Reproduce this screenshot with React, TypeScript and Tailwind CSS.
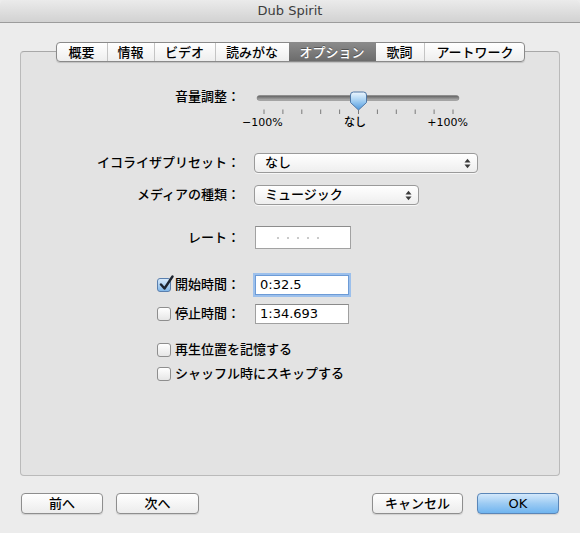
import type { ReactNode } from "react";

const FONT = "font-['Lucida_Grande','DejaVu_Sans','Noto_Sans_CJK_JP',sans-serif]";

const TABS = [
  { label: "概要", w: "w-[50px]" },
  { label: "情報", w: "w-[47px]" },
  { label: "ビデオ", w: "w-[61px]" },
  { label: "読みがな", w: "w-[74px]" },
  { label: "オプション", w: "w-[87px]", active: true },
  { label: "歌詞", w: "w-[48px]" },
  { label: "アートワーク", w: "w-[102px]" },
];

function TabBar() {
  return (
    <div className="relative z-10 mx-auto flex h-[20px] w-[469px] overflow-hidden rounded-[4px] border border-[#8a8a8a] bg-gradient-to-b from-white to-[#eeeeee] shadow-[0_1px_1px_rgba(0,0,0,0.15)]">
      {TABS.map((tab, i) => (
        <div
          key={tab.label}
          className={`flex h-full shrink-0 items-center justify-center text-[13px] leading-none ${tab.w} ${
            tab.active
              ? "bg-gradient-to-b from-[#8a8a8a] to-[#6c6c6c] text-white [text-shadow:0_-1px_0_rgba(0,0,0,0.35)]"
              : "text-black"
          } ${i > 0 && !tab.active && !TABS[i - 1].active ? "border-l border-[#c4c4c4]" : ""}`}
        >
          {tab.label}
        </div>
      ))}
    </div>
  );
}

function Label({ children }: { children: ReactNode }) {
  return <div className="w-[219px] shrink-0 text-right text-[13px] leading-[20px] text-black">{children}</div>;
}

function VolumeSlider() {
  const ticks = Array.from({ length: 11 }, (_, i) => 14 + i * 18.9);
  return (
    <div className="ml-[10px] flex flex-col">
      <svg width="230" height="30" viewBox="0 0 230 30">
        <defs>
          <linearGradient id="track" x1="0" y1="0" x2="0" y2="1">
            <stop offset="0" stopColor="#5e5e5e" />
            <stop offset="1" stopColor="#b4b4b4" />
          </linearGradient>
          <linearGradient id="thumb" x1="0" y1="0" x2="0" y2="1">
            <stop offset="0" stopColor="#eef7fe" />
            <stop offset="0.45" stopColor="#a9d2f3" />
            <stop offset="1" stopColor="#4d98de" />
          </linearGradient>
        </defs>
        <rect x="7" y="8.5" width="202" height="5" rx="2.5" fill="url(#track)" stroke="#7d7d7d" strokeWidth="0.5" />
        {ticks.map((x) => (
          <line key={x} x1={x} y1="22.5" x2={x} y2="27" stroke="#7a7a7a" strokeWidth="1" />
        ))}
        <path
          d="M100.5 8 Q100.5 5 103.5 5 H113.5 Q116.5 5 116.5 8 V15.5 L108.5 23 L100.5 15.5 Z"
          fill="url(#thumb)"
          stroke="#4f77a6"
          strokeWidth="1"
        />
      </svg>
      <div className="-ml-[8px] flex w-[226px] justify-between text-[11px] leading-[11px] text-black">
        <span>−100%</span>
        <span>なし</span>
        <span>+100%</span>
      </div>
    </div>
  );
}

function PopUp({ value, width }: { value: string; width: string }) {
  return (
    <div
      className={`ml-[14px] flex h-[20px] items-center rounded-[4px] border border-[#9a9a9a] bg-gradient-to-b from-white to-[#eeeeee] pl-[10px] pr-[6px] text-[13px] text-black shadow-[0_1px_0_rgba(255,255,255,0.7)] ${width}`}
    >
      <span>{value}</span>
      <svg className="ml-auto" width="7" height="11" viewBox="0 0 7 11">
        <path d="M0.5 4.5 L3.5 0.8 L6.5 4.5 Z" fill="#3a3a3a" />
        <path d="M0.5 6.5 L3.5 10.2 L6.5 6.5 Z" fill="#3a3a3a" />
      </svg>
    </div>
  );
}

function CheckBox({ checked }: { checked?: boolean }) {
  return (
    <div
      className={`relative h-[14px] w-[14px] shrink-0 rounded-[3px] border ${
        checked
          ? "border-[#5a7fae] bg-gradient-to-b from-[#d8eafb] to-[#82b7e8]"
          : "border-[#8e8e8e] bg-gradient-to-b from-white to-[#e6e6e6]"
      }`}
    >
      {checked && (
        <svg className="absolute -top-[4px] left-[1px]" width="15" height="16" viewBox="0 0 15 16">
          <path d="M2 9.5 L5.5 13.5 L13.5 1.5" fill="none" stroke="#1c2430" strokeWidth="2.4" strokeLinecap="round" strokeLinejoin="round" />
        </svg>
      )}
    </div>
  );
}

function TimeRow({ label, value, checked, focused }: { label: string; value: string; checked?: boolean; focused?: boolean }) {
  return (
    <div className="flex h-[20px] items-center">
      <div className="flex w-[219px] shrink-0 items-center pl-[136px] text-[13px] text-black">
        <CheckBox checked={checked} />
        <span className="ml-[4px] whitespace-nowrap">{label}</span>
      </div>
      <div
        className={`ml-[15px] flex h-[20px] w-[94px] items-center bg-white pl-[4px] text-[13px] text-black ${
          focused ? "border border-[#6d9bd6] shadow-[0_0_0_2px_#9cc0ec]" : "border border-[#a0a0a0] border-t-[#8a8a8a]"
        }`}
      >
        {value}
      </div>
    </div>
  );
}

function OptionRow({ label }: { label: string }) {
  return (
    <div className="flex h-[20px] items-center pl-[136px] text-[13px] text-black">
      <CheckBox />
      <span className="ml-[4px]">{label}</span>
    </div>
  );
}

function PushButton({ label, width, primary }: { label: string; width: string; primary?: boolean }) {
  return (
    <button
      className={`flex h-[21px] items-center justify-center rounded-[4px] border text-[13px] text-black shadow-[0_1px_1px_rgba(0,0,0,0.12)] ${width} ${
        primary
          ? "border-[#5a86b8] bg-gradient-to-b from-[#d3e8fb] via-[#9ccbf3] to-[#6fb4ef]"
          : "border-[#8e8e8e] bg-gradient-to-b from-white to-[#ececec]"
      }`}
    >
      {label}
    </button>
  );
}

export default function App() {
  return (
    <div className={`h-[533px] w-[580px] overflow-hidden bg-[#ececec] font-medium ${FONT}`}>
      <div className="flex h-[23px] items-center justify-center rounded-t-[5px] border-b border-[#9c9c9c] bg-gradient-to-b from-[#ebebeb] to-[#d2d2d2] text-[13px] font-normal text-[#3c3c3c]">
        Dub Spirit
      </div>

      <div className="mt-[19px]">
        <TabBar />
      </div>

      <div className="mx-[20px] -mt-[11px] h-[425px] rounded-[4px] border border-[#bababa] border-t-[#a8a8a8] bg-[#e3e3e3] pt-[35px]">
        <div className="flex items-start">
          <Label>音量調整：</Label>
          <VolumeSlider />
        </div>

        <div className="mt-[25px] flex items-center">
          <Label>イコライザプリセット：</Label>
          <PopUp value="なし" width="w-[224px]" />
        </div>

        <div className="mt-[12px] flex items-center">
          <Label>メディアの種類：</Label>
          <PopUp value="ミュージック" width="w-[165px]" />
        </div>

        <div className="mt-[21px] flex h-[23px] items-center">
          <Label>レート：</Label>
          <div className="ml-[15px] flex h-[23px] w-[96px] items-center gap-[8px] border border-[#a2a2a2] border-t-[#8c8c8c] bg-white pl-[21px]">
            {[0, 1, 2, 3, 4].map((i) => (
              <span key={i} className="h-[2px] w-[2px] rounded-full bg-[#b8b8b8]" />
            ))}
          </div>
        </div>

        <div className="mt-[26px]">
          <TimeRow label="開始時間：" value="0:32.5" checked focused />
        </div>
        <div className="mt-[9px]">
          <TimeRow label="停止時間：" value="1:34.693" />
        </div>

        <div className="mt-[16px]">
          <OptionRow label="再生位置を記憶する" />
        </div>
        <div className="mt-[4px]">
          <OptionRow label="シャッフル時にスキップする" />
        </div>
      </div>

      <div className="mt-[17px] flex items-center px-[21px]">
        <PushButton label="前へ" width="w-[82px]" />
        <div className="ml-[13px]">
          <PushButton label="次へ" width="w-[83px]" />
        </div>
        <div className="ml-auto">
          <PushButton label="キャンセル" width="w-[91px]" />
        </div>
        <div className="ml-[14px]">
          <PushButton label="OK" width="w-[82px]" primary />
        </div>
      </div>
    </div>
  );
}
